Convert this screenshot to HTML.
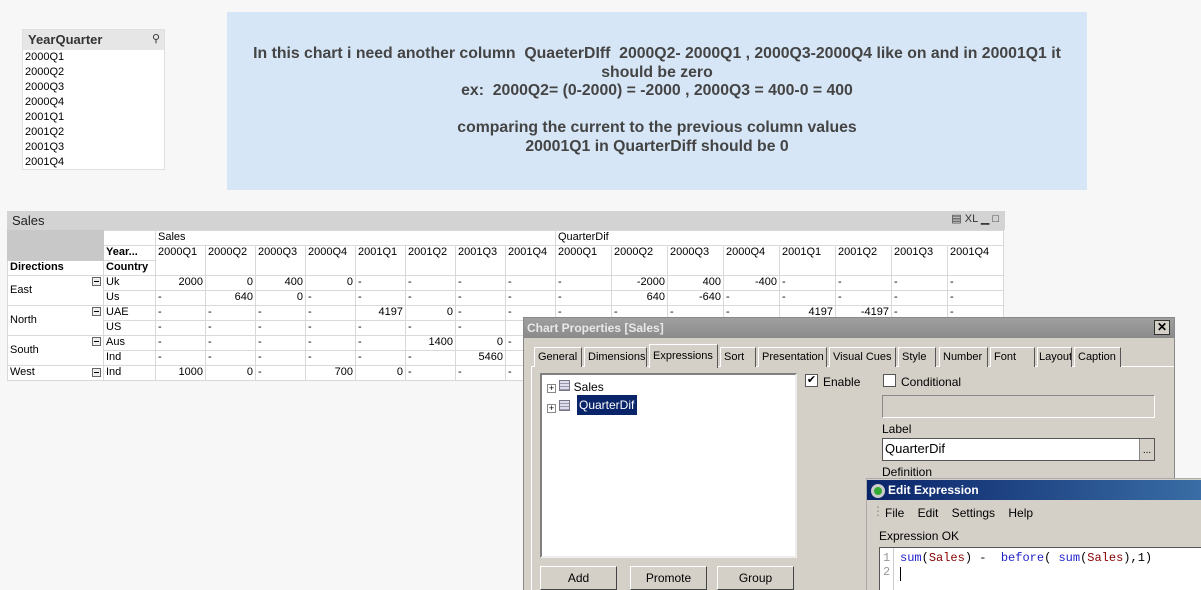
<!DOCTYPE html>
<html><head><meta charset="utf-8"><style>
*{box-sizing:border-box;margin:0;padding:0}
html,body{width:1201px;height:590px;overflow:hidden}
body{background:#f7f7f7;font-family:"Liberation Sans",sans-serif;position:relative;font-size:11px;color:#000}
.a{position:absolute}
.lb{left:22px;top:29px;width:143px;height:141px;background:#fff;border:1px solid #e0e0e0}
.lb .h{height:20px;background:#e6e6e6;font-size:13px;font-weight:bold;color:#333;padding:2px 0 0 5px}
.lb div.i{height:15px;line-height:15px;padding-left:2px;font-size:11px}
.note{left:227px;top:12px;width:860px;height:178px;background:#d6e6f6;color:#444;font-weight:bold;font-size:15.8px;text-align:center;line-height:18.5px;padding-top:33px;letter-spacing:0;white-space:nowrap}
.cap{left:7px;top:211px;width:998px;height:19px;background:#d3d3d3;font-size:13px;padding:2px 0 0 5px;color:#222}
table{position:absolute;left:7px;top:230px;border-collapse:collapse;table-layout:fixed;background:#fff;font-size:11px}
td{border:1px solid #d9d9d9;height:15px;padding:0 2px;white-space:nowrap;overflow:hidden;line-height:13px;vertical-align:top}
td.r{text-align:right}
td.b{font-weight:bold}
.mn{display:inline-block;width:9px;height:9px;border:1px solid #666;background:#eee;position:relative;float:right;margin-top:2px}
.mn:after{content:"";position:absolute;left:1px;top:3px;width:5px;height:1px;background:#000}
.dlg{left:523px;top:317px;width:652px;height:273px;background:#d4d0c8;border:1px solid #888;border-bottom:none;z-index:5;overflow:hidden}
.dt{height:20px;background:linear-gradient(#a0a0a0,#8a8a8a);color:#e8e8e8;font-weight:bold;font-size:12px;padding:3px 0 0 3px}
.x{position:absolute;right:4px;top:2px;width:16px;height:15px;border:1px solid #333;background:#d4d0c8;color:#000;font-size:12px;text-align:center;line-height:13px}
.tab{position:absolute;top:29px;height:20px;border:1px solid #fff;border-right:1px solid #555;border-bottom:none;font-size:11px;padding:3px 0 0 3px;background:#d4d0c8;white-space:nowrap;overflow:hidden}
.tab.act{top:26px;height:24px;z-index:2}
.pan{position:absolute;left:7px;top:48px;width:956px;height:240px;border:1px solid #fff;border-right-color:#555}
.tree{left:540px;top:373px;width:257px;height:185px;background:#fff;border:2px solid #808080;border-right-color:#eee;border-bottom-color:#eee;z-index:6;font-size:12px}
.btn{top:566px;height:24px;border:1px solid #fff;border-right-color:#444;border-bottom-color:#444;background:#d4d0c8;text-align:center;font-size:12px;line-height:22px;z-index:6}
.cb{width:13px;height:13px;background:#fff;border:1px solid #555;z-index:6}
.ee{left:866px;top:478px;width:340px;height:112px;background:#d4d0c8;border:1px solid #aaa;border-bottom:none;z-index:8;overflow:hidden}
.eet{height:20px;background:linear-gradient(90deg,#0a246a,#3a6ea5);color:#fff;font-weight:bold;font-size:12px;padding:3px 0 0 21px;margin-top:1px}
</style></head><body>
<div class="a lb"><div class="h">YearQuarter<span style="float:right;margin-right:4px;font-weight:normal;font-size:11px">&#9906;</span></div>
<div class="i">2000Q1</div><div class="i">2000Q2</div><div class="i">2000Q3</div><div class="i">2000Q4</div><div class="i">2001Q1</div><div class="i">2001Q2</div><div class="i">2001Q3</div><div class="i">2001Q4</div></div>
<div class="a note">In this chart i need another column&nbsp; QuaeterDIff&nbsp; 2000Q2- 2000Q1 , 2000Q3-2000Q4 like on and in 20001Q1 it<br>should be zero<br>ex:&nbsp; 2000Q2= (0-2000) = -2000 , 2000Q3 = 400-0 = 400<br><br>comparing the current to the previous column values<br>20001Q1 in QuarterDiff should be 0</div>
<div class="a cap">Sales<span style="position:absolute;right:6px;top:1px;font-size:11px;color:#333">&#9636; XL &#9601; &#9633;</span></div>
<table>
<colgroup><col style="width:96px"><col style="width:52px"><col span="8" style="width:50px"><col span="8" style="width:56px"></colgroup>
<tr><td rowspan="2" style="background:#c8c8c8;border-color:#c8c8c8"></td><td></td><td colspan="8">Sales</td><td colspan="8">QuarterDif</td></tr>
<tr><td class="b">Year...</td><td rowspan="2">2000Q1</td><td rowspan="2">2000Q2</td><td rowspan="2">2000Q3</td><td rowspan="2">2000Q4</td><td rowspan="2">2001Q1</td><td rowspan="2">2001Q2</td><td rowspan="2">2001Q3</td><td rowspan="2">2001Q4</td><td rowspan="2">2000Q1</td><td rowspan="2">2000Q2</td><td rowspan="2">2000Q3</td><td rowspan="2">2000Q4</td><td rowspan="2">2001Q1</td><td rowspan="2">2001Q2</td><td rowspan="2">2001Q3</td><td rowspan="2">2001Q4</td></tr>
<tr><td class="b">Directions</td><td class="b">Country</td></tr>
<tr><td rowspan="2" style="vertical-align:middle">East<span class="mn" style="margin-top:-7px"></span></td><td>Uk</td><td class="r">2000</td><td class="r">0</td><td class="r">400</td><td class="r">0</td><td>-</td><td>-</td><td>-</td><td>-</td><td>-</td><td class="r">-2000</td><td class="r">400</td><td class="r">-400</td><td>-</td><td>-</td><td>-</td><td>-</td></tr>
<tr><td>Us</td><td>-</td><td class="r">640</td><td class="r">0</td><td>-</td><td>-</td><td>-</td><td>-</td><td>-</td><td>-</td><td class="r">640</td><td class="r">-640</td><td>-</td><td>-</td><td>-</td><td>-</td><td>-</td></tr>
<tr><td rowspan="2" style="vertical-align:middle">North<span class="mn" style="margin-top:-7px"></span></td><td>UAE</td><td>-</td><td>-</td><td>-</td><td>-</td><td class="r">4197</td><td class="r">0</td><td>-</td><td>-</td><td>-</td><td>-</td><td>-</td><td>-</td><td class="r">4197</td><td class="r">-4197</td><td>-</td><td>-</td></tr>
<tr><td>US</td><td>-</td><td>-</td><td>-</td><td>-</td><td>-</td><td>-</td><td>-</td><td></td><td></td><td></td><td></td><td></td><td></td><td></td><td></td><td></td></tr>
<tr><td rowspan="2" style="vertical-align:middle">South<span class="mn" style="margin-top:-7px"></span></td><td>Aus</td><td>-</td><td>-</td><td>-</td><td>-</td><td>-</td><td class="r">1400</td><td class="r">0</td><td>-</td><td></td><td></td><td></td><td></td><td></td><td></td><td></td><td></td></tr>
<tr><td>Ind</td><td>-</td><td>-</td><td>-</td><td>-</td><td>-</td><td>-</td><td class="r">5460</td><td></td><td></td><td></td><td></td><td></td><td></td><td></td><td></td><td></td></tr>
<tr><td>West<span class="mn"></span></td><td>Ind</td><td class="r">1000</td><td class="r">0</td><td>-</td><td class="r">700</td><td class="r">0</td><td>-</td><td>-</td><td>-</td><td></td><td></td><td></td><td></td><td></td><td></td><td></td><td></td></tr>
</table>

<div class="a dlg"><div class="dt">Chart Properties [Sales]<div class="x">✕</div></div>
<div class="pan"></div>
<div class="tab" style="left:10px;width:48px">General</div>
<div class="tab" style="left:60px;width:63px">Dimensions</div>
<div class="tab act" style="left:125px;width:69px;padding-top:5px">Expressions</div>
<div class="tab" style="left:196px;width:36px">Sort</div>
<div class="tab" style="left:234px;width:69px">Presentation</div>
<div class="tab" style="left:305px;width:67px">Visual Cues</div>
<div class="tab" style="left:374px;width:38px">Style</div>
<div class="tab" style="left:415px;width:49px">Number</div>
<div class="tab" style="left:466px;width:45px">Font</div>
<div class="tab" style="left:513px;width:35px;padding-left:1px">Layout</div>
<div class="tab" style="left:550px;width:47px">Caption</div>
<div class="a" style="left:299px;top:57px;font-size:12px">Enable</div>
<div class="a" style="left:377px;top:57px;font-size:12px">Conditional</div>
<div class="a" style="left:358px;top:77px;width:273px;height:23px;border:1px solid #888;border-bottom-color:#fff;border-right-color:#fff"></div>
<div class="a" style="left:358px;top:104px;font-size:12px">Label</div>
<div class="a" style="left:358px;top:120px;width:273px;height:23px;background:#fff;border:1px solid #555;font-size:13px;padding:2px 2px">QuarterDif<div style="position:absolute;right:0;top:0;width:15px;height:21px;background:#d4d0c8;border-left:1px solid #888;font-size:10px;line-height:24px;text-align:center">...</div></div>
<div class="a" style="left:358px;top:147px;font-size:12px">Definition</div>
</div>
<div class="a cb" style="left:805px;top:374px;font-size:11px;line-height:10px;text-align:center">✔</div>
<div class="a cb" style="left:883px;top:374px"></div>
<div class="a tree">
<div style="position:absolute;left:5px;top:5px"><span style="display:inline-block;width:9px;height:9px;border:1px solid #888;font-size:9px;line-height:7px;text-align:center">+</span> <span style="display:inline-block;width:11px;height:11px;border:1px solid #778;background:repeating-linear-gradient(#dde 0 2px,#99a 2px 3px)"></span> Sales</div>
<div style="position:absolute;left:5px;top:25px"><span style="display:inline-block;width:9px;height:9px;border:1px solid #888;font-size:9px;line-height:7px;text-align:center">+</span> <span style="display:inline-block;width:11px;height:11px;border:1px solid #778;background:repeating-linear-gradient(#dde 0 2px,#99a 2px 3px)"></span></div>
<div style="position:absolute;left:35px;top:20px;width:60px;height:20px;background:#0a246a;color:#fff;line-height:20px;padding-left:2px;white-space:nowrap">QuarterDif</div>
</div>
<div class="a btn" style="left:540px;width:77px">Add</div>
<div class="a btn" style="left:630px;width:77px">Promote</div>
<div class="a btn" style="left:717px;width:77px">Group</div>
<div class="a ee"><div class="eet">Edit Expression<span style="position:absolute;left:4px;top:5px;width:14px;height:14px;border-radius:50%;background:#3a3;border:3px solid #ccc"></span></div>
<div style="position:absolute;left:5px;top:25px;font-size:12px;color:#888">&#8942;</div>
<div style="position:absolute;left:18px;top:27px;font-size:12px">File&nbsp;&nbsp;&nbsp;&nbsp;Edit&nbsp;&nbsp;&nbsp;&nbsp;Settings&nbsp;&nbsp;&nbsp;&nbsp;Help</div>
<div style="position:absolute;left:12px;top:50px;font-size:12px">Expression OK</div>
<div style="position:absolute;left:12px;top:68px;width:340px;height:50px;background:#fff;border:1px solid #555;font-family:'Liberation Mono',monospace;font-size:12px">
<div style="position:absolute;left:0;top:0;width:14px;height:50px;border-right:1px solid #ccc;color:#999;padding:3px 0 0 3px;line-height:14px">1<br>2</div>
<div style="position:absolute;left:20px;top:3px;line-height:14px;white-space:pre"><span style="color:#22c">sum</span>(<span style="color:#800">Sales</span>) -  <span style="color:#22c">before</span>( <span style="color:#22c">sum</span>(<span style="color:#800">Sales</span>),1)</div>
<div style="position:absolute;left:20px;top:19px;width:1px;height:14px;background:#000"></div>
</div></div>
</body></html>
